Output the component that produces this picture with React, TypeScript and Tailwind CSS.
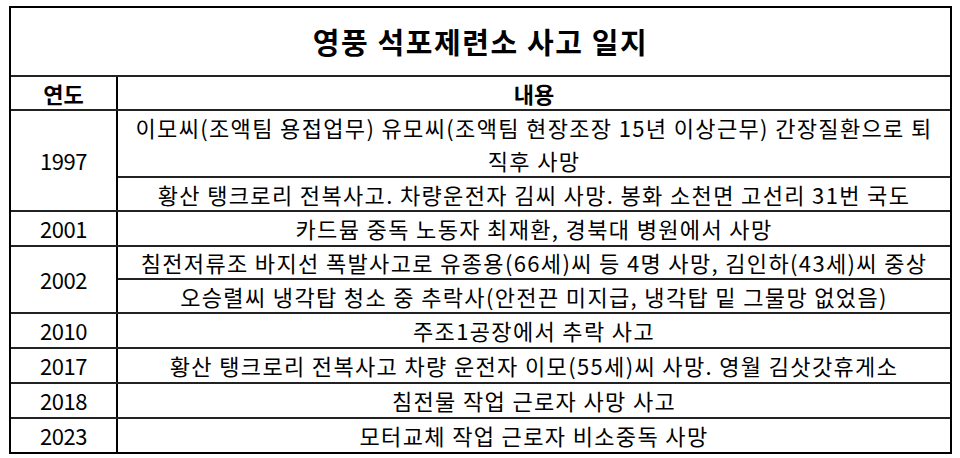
const FONT = "font-['Noto_Sans_CJK_KR','Noto_Sans',sans-serif]";

type Sub = { text: React.ReactNode; h: string };
type Group = { year: string; subs: Sub[] };

// heights: sub rows with their own bottom line include it; the last sub of a group
// sits above the group's 2px line, so it is 2px shorter
const ROWS: Group[] = [
  {
    year: "1997",
    subs: [
      {
        text: (
          <>
            이모씨(조액팀 용접업무) 유모씨(조액팀 현장조장 15년 이상근무) 간장질환으로 퇴
            <br />
            직후 사망
          </>
        ),
        h: "h-[67px]",
      },
      { text: "황산 탱크로리 전복사고. 차량운전자 김씨 사망. 봉화 소천면 고선리 31번 국도", h: "h-[32px]" },
    ],
  },
  { year: "2001", subs: [{ text: "카드뮴 중독 노동자 최재환, 경북대 병원에서 사망", h: "h-[32px]" }] },
  {
    year: "2002",
    subs: [
      { text: "침전저류조 바지선 폭발사고로 유종용(66세)씨 등 4명 사망, 김인하(43세)씨 중상", h: "h-[33px]" },
      { text: "오승렬씨 냉각탑 청소 중 추락사(안전끈 미지급, 냉각탑 밑 그물망 없었음)", h: "h-[32px]" },
    ],
  },
  { year: "2010", subs: [{ text: "주조1공장에서 추락 사고", h: "h-[32px]" }] },
  { year: "2017", subs: [{ text: "황산 탱크로리 전복사고 차량 운전자 이모(55세)씨 사망. 영월 김삿갓휴게소", h: "h-[32px]" }] },
  { year: "2018", subs: [{ text: "침전물 작업 근로자 사망 사고", h: "h-[32px]" }] },
  { year: "2023", subs: [{ text: "모터교체 작업 근로자 비소중독 사망", h: "h-[32px]" }] },
];

export default function App() {
  return (
    <div className={`min-h-[458px] w-[960px] bg-white pt-[6px] pl-[9px] text-black ${FONT}`}>
      <div className="w-[943px] border-2 border-black">
        <div className="flex h-[69px] items-center justify-center border-b-2 border-[#222] text-[29px] font-bold tracking-[1.6px]">
          영풍 석포제련소 사고 일지
        </div>
        <div className="grid h-[34px] grid-cols-[107px_1fr] border-b-2 border-[#222] text-[22px] font-bold leading-none">
          <div className="flex items-center justify-center border-r-2 border-black">연도</div>
          <div className="flex items-center justify-center">내용</div>
        </div>
        {ROWS.map((g, gi) => (
          <div
            key={g.year}
            className={`grid grid-cols-[107px_1fr] text-[22px] leading-[33px] ${
              gi < ROWS.length - 1 ? "border-b-2 border-[#222]" : ""
            }`}
          >
            <div className="flex items-center justify-center border-r-2 border-black tracking-[-0.5px]">
              {g.year}
            </div>
            <div className="flex flex-col">
              {g.subs.map((s, si) => (
                <div
                  key={si}
                  className={`flex ${s.h} items-center justify-center whitespace-nowrap text-center tracking-[1.35px] ${
                    si < g.subs.length - 1 ? "border-b-2 border-[#222]" : ""
                  }`}
                >
                  <span>{s.text}</span>
                </div>
              ))}
            </div>
          </div>
        ))}
      </div>
    </div>
  );
}
